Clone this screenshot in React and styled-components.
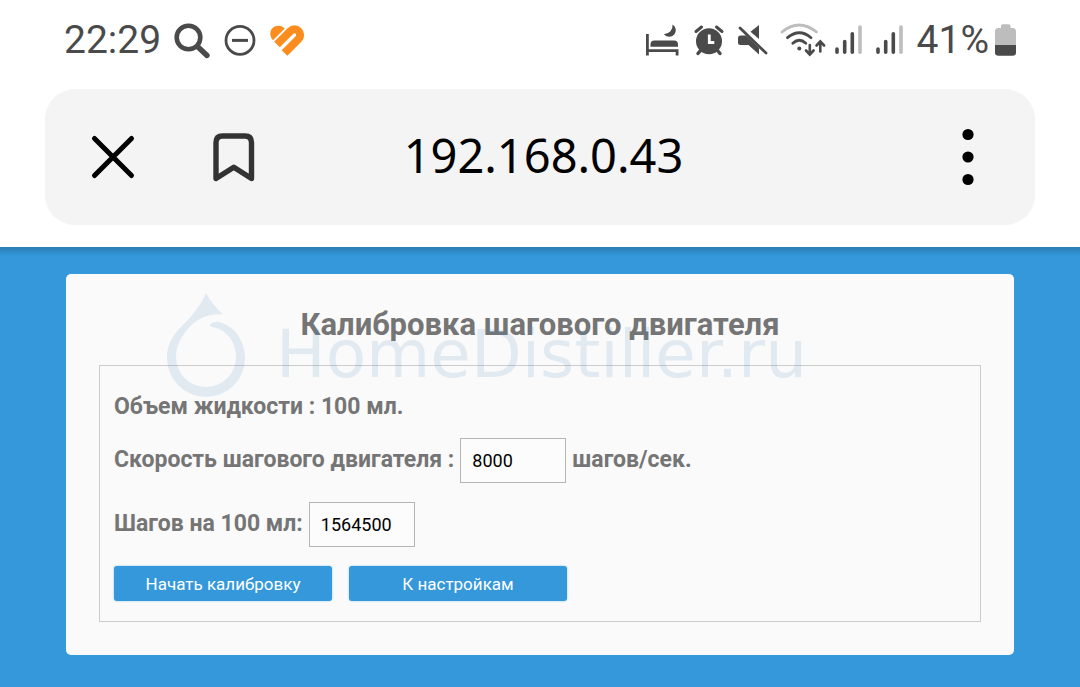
import React from "react";
import styled, { createGlobalStyle } from "styled-components";

const INK = "#4a4a4a";
const FADED = "#bdbdbd";
const BLUE = "#3498db";

const GlobalStyle = createGlobalStyle`
  *, *::before, *::after { box-sizing: border-box; }
  body {
    margin: 0;
    background: #fff;
    font-family: Roboto, "Liberation Sans", sans-serif;
  }
  svg { display: block; flex: none; overflow: visible; }
`;

const Screen = styled.div`
  display: flex;
  flex-direction: column;
  min-height: 100vh;
`;

const StatusBar = styled.header`
  display: flex;
  align-items: center;
  justify-content: space-between;
  height: 80px;
  padding: 0 64px;
  color: ${INK};
`;

const StatusGroup = styled.div`
  display: flex;
  align-items: center;
  gap: ${(p) => (p.$tight ? 6 : 13)}px;
`;

const StatusText = styled.span`
  font-size: 39px;
  line-height: 48px;
  font-weight: 400;
`;

const Toolbar = styled.nav`
  display: grid;
  grid-template-columns: 1fr auto 1fr;
  align-items: center;
  height: 136px;
  margin: 9px 45px 22px;
  padding: 0 40px 0 47px;
  border-radius: 30px;
  background: #f4f4f4;
`;

const ToolbarActions = styled.div`
  display: flex;
  align-items: center;
  gap: 79px;
  justify-self: ${(p) => (p.$end ? "end" : "start")};
`;

const IconButton = styled.button`
  display: flex;
  justify-content: center;
  width: ${(p) => p.$width}px;
  padding: 0;
  border: 0;
  background: none;
  color: #000;
`;

const Address = styled.div`
  padding-bottom: 5px;
  font-family: "Noto Sans", "Open Sans", sans-serif;
  font-size: 47px;
  line-height: 60px;
  color: #000;
`;

const Page = styled.main`
  flex: 1;
  padding: 27px 66px 32px;
  background: linear-gradient(rgba(0, 0, 0, 0.18), transparent 9px) ${BLUE};
`;

const Card = styled.section`
  position: relative;
  padding: 33px;
  border-radius: 5px;
  background: #fafafa;
`;

const Title = styled.h1`
  margin: 0 0 22px;
  font-size: 31px;
  line-height: 36px;
  font-weight: 700;
  text-align: center;
  color: #757575;
`;

const Watermark = styled.div`
  position: absolute;
  top: 19px;
  left: 101px;
  display: flex;
  align-items: center;
  gap: 31px;
  color: #3f86bc;
  opacity: 0.13;
  pointer-events: none;
`;

const WatermarkText = styled.span`
  padding-top: 20px;
  font-family: "DejaVu Sans", sans-serif;
  font-size: 66px;
  line-height: 80px;
`;

const Form = styled.form`
  display: flex;
  flex-direction: column;
  gap: 19px;
  padding: 29px 14px 20px;
  border: 1px solid #ccc;
  font-size: 23px;
  line-height: 24px;
  font-weight: 700;
  color: #757575;
`;

const Row = styled.div`
  display: flex;
  align-items: baseline;
  gap: 6px;
`;

const NumberInput = styled.input`
  width: 106px;
  height: 45px;
  padding: 0 11px;
  border: 1px solid #b5b5b5;
  border-radius: 0;
  background: #fcfcfc;
  font-family: inherit;
  font-size: 18px;
  color: #000;
`;

const Buttons = styled.div`
  display: flex;
  gap: 17px;
`;

const Button = styled.button`
  width: 218px;
  height: 35px;
  padding: 0;
  border: 0;
  border-radius: 3px;
  background: ${BLUE};
  box-shadow: 0 0 2px rgba(52, 152, 219, 0.6);
  font-family: inherit;
  font-size: 17px;
  line-height: 20px;
  color: #fff;
`;

const SearchIcon = () => (
  <svg width="37" height="36" viewBox="0 0 37 36" fill="none" stroke={INK} strokeLinecap="round">
    <circle cx="14.5" cy="15.5" r="11.8" strokeWidth="4.6" />
    <path d="M24 25l9 8.500" strokeWidth="5.4" />
  </svg>
);

const DoNotDisturbIcon = () => (
  <svg width="32" height="36" viewBox="0 0 32 36" fill="none" stroke={INK}>
    <circle cx="16" cy="18.4" r="14" strokeWidth="2.8" />
    <path d="M8 18.4h16" strokeWidth="3" />
  </svg>
);

const HeartIcon = () => (
  <svg width="36" height="36" viewBox="0 0 36 36" fill="none">
    <path d="M4 18.3C-1 13 1 4 9 3.700c3-.1 5 1 6.800 2.900z" fill="#fb8c1e" />
    <path d="M8 22.500L21.500 9a5.600 5.600 0 0 1 8 8L15.500 31" stroke="#fb8c1e" strokeWidth="8" />
  </svg>
);

const BedIcon = () => (
  <svg width="36" height="36" viewBox="0 0 36 36" fill={INK}>
    <path d="M1 12h2.800v15.200H33.500V33.500h-2.800v-3.400H3.800v3.400H1z" />
    <path d="M5.500 24.800v-2.300q0-4 4-4H29q4 0 4 4v2.300z" />
    <path d="M27.500 2.500a6.600 6.600 0 1 1-8.700 9.500a8.300 8.300 0 0 0 8.700-9.500z" />
  </svg>
);

const AlarmIcon = () => (
  <svg width="30" height="36" viewBox="0 0 30 36" fill="none" stroke={INK} strokeLinecap="round">
    <circle cx="15" cy="19.300" r="13" fill={INK} stroke="none" />
    <path d="M2 9.500L7.500 5M28 9.500L22.500 5" strokeWidth="3" />
    <path d="M6.500 28.500L4 31.500M23.500 28.500l2.500 3" strokeWidth="3.500" />
    <path d="M15.300 12.500v8h5" stroke="#fff" strokeWidth="2.800" strokeLinecap="butt" />
  </svg>
);

const MuteIcon = () => (
  <svg width="30" height="36" viewBox="0 0 30 36" fill={INK}>
    <path d="M22 3v14L13.500 9.800z" />
    <path d="M3.500 13.500H9L22 26v6.500L11.500 23h-8q-2.500 0-2.500-2.500v-4.500q0-2.500 2.500-2.500z" />
    <path d="M3 6l26 25" stroke={INK} strokeWidth="2.800" strokeLinecap="round" />
  </svg>
);

const WifiIcon = () => (
  <svg width="42" height="36" viewBox="0 0 42 36" fill="none" strokeWidth="2.800" strokeLinecap="round">
    <path d="M2 10q17-14 34.500 0" stroke={FADED} />
    <path d="M7.500 15.700q12-10 23.500 0M12.800 21.300q6.500-6 13 0" stroke={INK} />
    <circle cx="19.300" cy="26.400" r="2" fill={INK} />
    <path d="M29.800 23v9M26 28.500l3.800 4 3.800-4M40.300 29.500V20M36.500 23.500l3.800-4 3.800 4" stroke={INK} strokeWidth="2.600" />
  </svg>
);

const SignalIcon = () => (
  <svg width="28" height="36" viewBox="0 0 28 36" fill="none" strokeWidth="3.600" strokeLinecap="round">
    <path d="M2 27v3.300M9.700 19.500v10.800M17.300 11.800v18.500" stroke={INK} />
    <path d="M25 5v25.300" stroke={FADED} />
  </svg>
);

const BatteryIcon = () => (
  <svg width="21" height="36" viewBox="0 0 21 36">
    <path d="M0 23V9.500q0-3.500 3.500-3.500H6V4q0-1.700 1.700-1.700h6Q15.500 2.300 15.500 4v2h2q3.500 0 3.500 3.500V23z" fill={FADED} />
    <path d="M0 23h21v7.500q0 3.300-3.500 3.300h-14Q0 33.800 0 30.500z" fill={INK} />
  </svg>
);

const CloseIcon = () => (
  <svg width="42" height="42" viewBox="0 0 42 42" fill="none" stroke="currentColor" strokeWidth="5" strokeLinecap="round">
    <path d="M2.500 2.500l37 37M39.500 2.500l-37 37" />
  </svg>
);

const BookmarkIcon = () => (
  <svg width="42" height="48" viewBox="0 0 42 48" fill="none" stroke="#333" strokeWidth="5.400" strokeLinejoin="round">
    <path d="M3 45.500V9.500q0-6.500 6.500-6.500h22.500q6.500 0 6.500 6.500v36L20.800 34.200z" />
  </svg>
);

const MoreIcon = () => (
  <svg width="12" height="56" viewBox="0 0 12 56" fill="currentColor">
    <circle cx="6" cy="5.500" r="5.600" />
    <circle cx="6" cy="28" r="5.600" />
    <circle cx="6" cy="50.500" r="5.600" />
  </svg>
);

const DropLogo = () => (
  <svg width="78" height="104" viewBox="0 0 78 104" fill="currentColor">
    <path d="M39 0C43 8 49 15 56 21.500C40 20 28 27 20 37C13 46 9 54 9 64a30 30 0 0 0 60 0C69 49 60 37 46.500 34.500Q42 33.500 43 31.500Q46 28 52 29C68 33 78 48 78 65a39 39 0 0 1-78 0C0 46 12 36 20 28C28 19 35 10 39 0z" />
  </svg>
);

export default function App() {
  return (
    <Screen>
      <GlobalStyle />
      <StatusBar>
        <StatusGroup>
          <StatusText>22:29</StatusText>
          <SearchIcon />
          <DoNotDisturbIcon />
          <HeartIcon />
        </StatusGroup>
        <StatusGroup>
          <BedIcon />
          <AlarmIcon />
          <MuteIcon />
          <WifiIcon />
          <SignalIcon />
          <SignalIcon />
          <StatusGroup $tight>
            <StatusText>41%</StatusText>
            <BatteryIcon />
          </StatusGroup>
        </StatusGroup>
      </StatusBar>

      <Toolbar>
        <ToolbarActions>
          <IconButton type="button" $width={42} aria-label="Закрыть">
            <CloseIcon />
          </IconButton>
          <IconButton type="button" $width={42} aria-label="Закладка">
            <BookmarkIcon />
          </IconButton>
        </ToolbarActions>
        <Address>192.168.0.43</Address>
        <ToolbarActions $end>
          <IconButton type="button" $width={54} aria-label="Меню">
            <MoreIcon />
          </IconButton>
        </ToolbarActions>
      </Toolbar>

      <Page>
        <Card>
          <Title>Калибровка шагового двигателя</Title>
          <Form onSubmit={(e) => e.preventDefault()}>
            <Row>Объем жидкости : 100 мл.</Row>
            <Row>
              <label htmlFor="speed">Скорость шагового двигателя :</label>
              <NumberInput id="speed" inputMode="numeric" defaultValue="8000" />
              <span>шагов/сек.</span>
            </Row>
            <Row>
              <label htmlFor="steps">Шагов на 100 мл:</label>
              <NumberInput id="steps" inputMode="numeric" defaultValue="1564500" />
            </Row>
            <Buttons>
              <Button type="submit">Начать калибровку</Button>
              <Button type="button">К настройкам</Button>
            </Buttons>
          </Form>
          <Watermark>
            <DropLogo />
            <WatermarkText>HomeDistiller.ru</WatermarkText>
          </Watermark>
        </Card>
      </Page>
    </Screen>
  );
}
